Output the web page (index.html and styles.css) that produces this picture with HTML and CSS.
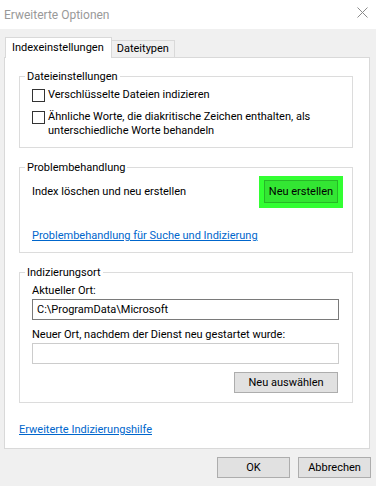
FILE: index.html
```html
<!DOCTYPE html>
<html>
	<head>
		<title>Erweiterte Optionen</title>
		<meta charset="UTF-8">
		<link rel="stylesheet" href="styles.css">
	</head>
	<body>
		<div class="titlebar">
			<span class="title">Erweiterte Optionen</span>
			<svg class="close" width="11" height="11" viewBox="0 0 11 11">
				<path d="M0.5 0.5 L10.5 10.5 M10.5 0.5 L0.5 10.5" stroke="#8a8a8a" stroke-width="1" fill="none"/>
			</svg>
		</div>
		<div class="window">
			<div class="tabs">
				<div class="tab active">Indexeinstellungen</div>
				<div class="tab">Dateitypen</div>
			</div>
			<div class="panel">
				<fieldset class="group">
					<legend>Dateieinstellungen</legend>
					<label class="check"><span class="box"></span><span>Verschlüsselte Dateien indizieren</span></label>
					<label class="check second"><span class="box"></span><span>Ähnliche Worte, die diakritische Zeichen enthalten, als unterschiedliche Worte behandeln</span></label>
				</fieldset>
				<fieldset class="group">
					<legend>Problembehandlung</legend>
					<div class="row">
						<span>Index löschen und neu erstellen</span>
						<span class="highlight"><button class="btn green">Neu erstellen</button></span>
					</div>
					<a class="link trouble" href="#">Problembehandlung für Suche und Indizierung</a>
				</fieldset>
				<fieldset class="group">
					<legend>Indizierungsort</legend>
					<div class="label first">Aktueller Ort:</div>
					<div class="field">C:\ProgramData\Microsoft</div>
					<div class="label">Neuer Ort, nachdem der Dienst neu gestartet wurde:</div>
					<div class="field empty"></div>
					<div class="right"><button class="btn select">Neu auswählen</button></div>
				</fieldset>
				<a class="link help" href="#">Erweiterte Indizierungshilfe</a>
			</div>
			<div class="actions">
				<button class="btn dialog">OK</button>
				<button class="btn dialog">Abbrechen</button>
			</div>
		</div>
	</body>
</html>
```

FILE: styles.css
```css
* {
	box-sizing: border-box;
}

html, body {
	margin: 0;
	padding: 0;
	width: 376px;
	height: 486px;
	overflow: hidden;
}

body {
	background: #f0f0f0;
	font-family: "Segoe UI", Roboto, "Liberation Sans", sans-serif;
	font-size: 11px;
	line-height: 14px;
	color: #000;
}

.titlebar {
	height: 29px;
	background: #fff;
	display: flex;
	align-items: center;
	justify-content: space-between;
	padding: 0 8px 0 4px;
}

.title {
	color: #999;
	font-size: 12px;
}

.close {
	display: block;
	margin-top: -4px;
}

.tabs {
	display: flex;
	align-items: flex-end;
	margin: 8px 0 0 5px;
	height: 20px;
}

.tab {
	height: 17px;
	padding: 0 5px;
	border: 1px solid #d9d9d9;
	border-bottom: none;
	border-left: none;
	background: #f0f0f0;
	line-height: 16px;
}

.tab.active {
	height: 21px;
	margin-bottom: -1px;
	position: relative;
	background: #fff;
	border-left: 1px solid #d9d9d9;
	padding: 2px 7px 0 6px;
}

.panel {
	margin-left: 4px;
	width: 366px;
	background: #fff;
	border: 1px solid #d9d9d9;
	padding: 11px 16px 11px 14px;
}

.group {
	margin: 0 0 12px 0;
	padding: 0 13px 9px 12px;
	border: 1px solid #dcdcdc;
	min-width: 0;
}

legend {
	margin-left: -7px;
	padding: 0 2px;
	line-height: 15px;
}

.check {
	display: flex;
	align-items: flex-start;
	margin-top: 4px;
}

.check.second {
	margin-top: 8px;
}

.box {
	flex: none;
	width: 13px;
	height: 13px;
	margin: 1px 3px 0 0;
	border: 1px solid #333;
	background: #fff;
}

.row {
	display: flex;
	align-items: center;
	justify-content: space-between;
	margin: 1px -4px 0 0;
}

.highlight {
	display: block;
	background: #33ff33;
	padding: 4px 5px 5px 5px;
}

.btn {
	font: inherit;
	color: #000;
	height: 21px;
	padding: 0;
	border: 1px solid #adadad;
	background: #e1e1e1;
}

.btn.green {
	width: 74px;
	height: 23px;
	background: #33e633;
	border-color: #27b827;
}

.link {
	display: block;
	color: #0066cc;
	text-decoration: underline;
}

.link.trouble {
	margin-top: 21px;
}

.label {
	margin-top: 8px;
}

.label.first {
	margin-top: 4px;
}

.field {
	margin-top: 1px;
	height: 21px;
	border: 1px solid #7a7a7a;
	padding: 3px 4px 0 4px;
}

.field.empty {
	border-color: #cccccc;
}

.right {
	display: flex;
	justify-content: flex-end;
	margin: 8px 1px 0 0;
}

.btn.select {
	width: 104px;
}

.help {
	margin-top: 20px;
}

.actions {
	display: flex;
	justify-content: flex-end;
	gap: 8px;
	margin: 8px 5px 0 0;
}

.btn.dialog {
	width: 73px;
}
```
